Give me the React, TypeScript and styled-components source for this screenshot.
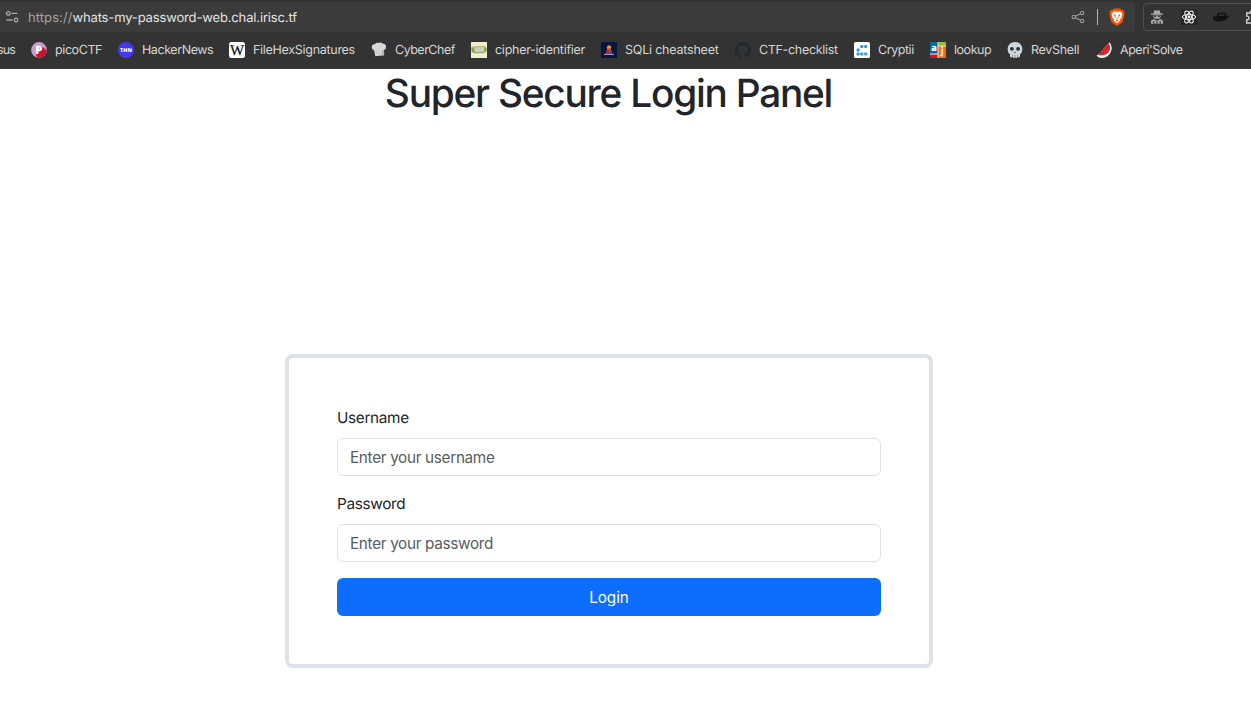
import React from "react";
import styled, { createGlobalStyle } from "styled-components";

const GlobalStyle = createGlobalStyle`
  * { box-sizing: border-box; }
  body {
    margin: 0;
    background: #fff;
    color: #212529;
    font-family: Inter, "Liberation Sans", sans-serif;
    overflow: hidden;
    text-rendering: geometricPrecision;
  }
`;

const Page = styled.div`
  width: 100%;
  height: 704px;
  overflow: hidden;
`;

const Chrome = styled.header`
  height: 69px;
  background: #333333;
  border-bottom: 1px solid #3a3a3a;
  overflow: hidden;
`;

const Toolbar = styled.div`
  display: flex;
  height: 32px;
  padding-top: 2px;
`;

const AddressBar = styled.div`
  display: flex;
  align-items: center;
  flex: none;
  width: 1135px;
  height: 30px;
  padding: 0 10px 0 4px;
  background: #3b3b3b;
  border-radius: 0 4px 4px 0;
`;

const Url = styled.div`
  flex: 1;
  margin-left: 8px;
  padding-top: 2px;
  font-size: 13px;
  line-height: 20px;
  letter-spacing: -0.15px;
  white-space: pre;
  color: #e3e3e3;
`;

const Scheme = styled.span`
  color: #a3a3a3;
  letter-spacing: 0.08px;
`;

const Divider = styled.div`
  width: 1px;
  height: 16px;
  margin: 0 11px;
  background: #b4b4b4;
`;

const Extensions = styled.div`
  display: flex;
  align-items: center;
  flex: none;
  gap: 16px;
  width: 140px;
  height: 28px;
  margin: 1px 0 0 8px;
  padding-left: 5px;
  border: 1px solid #4e4e4e;
  border-radius: 4px;
`;

const Bookmarks = styled.nav`
  display: flex;
  align-items: center;
  gap: 16px;
  height: 36px;
`;

const Bookmark = styled.div`
  display: flex;
  align-items: center;
  flex: none;
  gap: 8px;
`;

const Label = styled.span<{ $width: number; $tracking: number }>`
  width: ${(p) => p.$width}px;
  padding-top: 2px;
  font-size: 12.5px;
  line-height: 18px;
  letter-spacing: ${(p) => p.$tracking}px;
  white-space: nowrap;
  color: #d6d6d6;
`;

const ClippedLabel = styled(Label)`
  display: flex;
  justify-content: flex-end;
`;

const Icon = styled.svg`
  display: block;
  flex: none;
  width: 16px;
  height: 16px;
`;

const Main = styled.main`
  display: flex;
  flex-direction: column;
  align-items: center;
  width: 1218px;
`;

const Title = styled.h1`
  margin: 0 0 236px;
  padding: 1px 1px 0 0;
  font-size: 38.8px;
  font-weight: 500;
  line-height: 48px;
  letter-spacing: -1.24px;
  white-space: nowrap;
`;

const Card = styled.form`
  display: flex;
  flex-direction: column;
  gap: 16px;
  width: 648px;
  padding: 48px;
  border: 4px solid #dee2e6;
  border-radius: 8px;
`;

const Field = styled.label`
  display: flex;
  flex-direction: column;
  gap: 8px;
  font-size: 15.3px;
  line-height: 24px;
  letter-spacing: -0.32px;
`;

const Input = styled.input`
  height: 38px;
  padding: 0 12px;
  border: 1px solid #dee2e6;
  border-radius: 6px;
  background: #fff;
  font: inherit;
  letter-spacing: inherit;
  &::placeholder {
    color: #595c5f;
    opacity: 1;
  }
`;

const LoginButton = styled.button`
  height: 38px;
  padding: 1px 0 0;
  border: 0;
  border-radius: 6px;
  background: #0d6efd;
  color: #fff;
  font: 400 15.3px/24px Inter, "Liberation Sans", sans-serif;
  letter-spacing: -0.05px;
`;

const SettingsIcon = () => (
  <Icon viewBox="0 0 16 16" fill="none" stroke="#a8a8a8" strokeWidth="1.3" strokeLinecap="round">
    <circle cx="4.300" cy="4.4" r="1.8" />
    <path d="M8 4.4H12.800" />
    <circle cx="12.100" cy="11" r="1.8" />
    <path d="M3 11H8.100" />
  </Icon>
);

const ShareIcon = () => (
  <Icon viewBox="0 0 16 16" fill="none" stroke="#9c9c9c" strokeWidth="1.1">
    <circle cx="3.8" cy="8" r="1.7" />
    <circle cx="12.1" cy="4" r="1.7" />
    <circle cx="12.1" cy="12" r="1.7" />
    <path d="M5.4 7.3 10.5 4.8M5.4 8.7l5.1 2.5" />
  </Icon>
);

const BraveShield = styled(Icon)`
  width: 16px;
  height: 18px;
`;

const BraveIcon = () => (
  <BraveShield viewBox="0 0 16 18">
    <path fill="#ff5100" d="M5 .4h6l1.3 1.5 1.5-.1L15.600 4l-.5 1.5.4 1.3-1.8 6.700q-.3 1-1.100 1.600L8 18l-4.600-2.900q-.8-.6-1.100-1.600L.5 6.800.9 5.500.4 4l1.800-2.200 1.500.1z" />
    <path fill="#fff" d="m4.800 3.300 1.700.5h3l1.700-.5 2.300 2.800-.7 1.600.2 1.300-2 2.400.2 1.400L8 15.200l-3.200-2.400.2-1.400L3 9l.2-1.300-.7-1.600z" />
    <path fill="#ff5100" d="m4.500 6.400 2.300.4-.4 1.400.5 1.900 1.100.6 1.100-.6.500-1.900-.4-1.400 2.300-.4-1.300 2.100-.2.900L8 11.600 6 9.400l-.2-.9zM6.500 12.400 8 11.700l1.500.7L8 13.600z" />
    <path fill="#fff" d="M7.300 5h1.400v4.800L8 10.200l-.7-.4z" />
  </BraveShield>
);

const SpyIcon = () => (
  <Icon viewBox="0 0 16 16" fill="#aaaaaa">
    <path d="M5.300 1.300 7 1.600h2l1.700-.3.800 3.200H14v1.300H2V4.500h2.500z" />
    <path d="M4.300 6.400h7.400v1.500L10 9.800H6L4.300 7.900z" />
    <path d="M2 14.800v-3.100L4.800 9.900 8 11.600l3.200-1.700 2.800 1.800v3.100z" />
    <path fill="#333" d="M5 6.800h2v1.200H5.300zM9 6.800h2l-.3 1.200H9zM7.500 10.700h1v4.200h-1zM4.300 12h1v3h-1zM10.700 12h1v3h-1z" />
  </Icon>
);

const ReactIcon = () => (
  <Icon viewBox="0 0 16 16">
    <path fill="#272727" d="M0 0h16v16H0z" />
    <g fill="none" stroke="#fff" strokeWidth="1">
      <ellipse cx="8" cy="8" rx="6.700" ry="2.600" />
      <ellipse cx="8" cy="8" rx="6.700" ry="2.600" transform="rotate(60 8 8)" />
      <ellipse cx="8" cy="8" rx="6.700" ry="2.600" transform="rotate(120 8 8)" />
    </g>
    <circle cx="8" cy="8" r="1.400" fill="#fff" />
  </Icon>
);

const HatIcon = () => (
  <Icon viewBox="0 0 16 16">
    <path fill="#0c0c0c" d="M3.500 7.500 4.300 4.600Q5 3.500 8 3.700q4-.7 5 .2l.2 3.600 2.300-.7q.8.500-.5 2-2.500 2.800-7 3.500-5 .6-7.400-1.600Q-.5 8.700.6 7.600q1.300-.6 2.900-.1z" />
    <path fill="#292929" d="M1.500 8.300 3.400 8l.1 1.800q4.500 1.500 9.500-.7l.2-1.500 1.500-.3q-2 3.200-7 3.700-4.500.2-6.200-2.700zM5.500 4.800l6.300-.3-.1 2.200-6.500.8z" />
  </Icon>
);

const PuzzleIcon = () => (
  <Icon viewBox="0 0 16 16" fill="none" stroke="#cfcfcf" strokeWidth="1.400">
    <path d="M1.700 4h3.600V3.500a1.700 1.700 0 0 1 3.400 0V4H13v4h.7a1.500 1.500 0 0 1 0 3H13v3H1.700v-3.300h.5a1.800 1.800 0 0 0 0-3.600h-.5z" />
  </Icon>
);

const IconText = styled.text<{ $serif?: boolean }>`
  font-family: ${(p) => (p.$serif ? '"Liberation Serif", serif' : '"Open Sans", sans-serif')};
  font-weight: ${(p) => (p.$serif ? 400 : 800)};
  text-anchor: middle;
`;

const PicoIcon = () => (
  <Icon viewBox="0 0 16 16">
    <circle cx="8" cy="8" r="7.900" fill="#c99bcd" />
    <path fill="#c4122f" d="M10.800 4.200 15.800 8.500A7.900 7.900 0 0 1 6 15.600L4.800 12.300z" />
    <IconText x="7.800" y="12.200" fontSize="11.500" fill="#fff">P</IconText>
  </Icon>
);

const HackerIcon = () => (
  <Icon viewBox="0 0 16 16">
    <circle cx="8" cy="8" r="8" fill="#4338f0" />
    <IconText x="8" y="9.900" fontSize="5.400" fill="#fff">THN</IconText>
  </Icon>
);

const WikiIcon = () => (
  <Icon viewBox="0 0 16 16">
    <rect width="16" height="16" rx="2.500" fill="#fff" />
    <IconText $serif x="8" y="13" fontSize="15" fill="#111" stroke="#111" strokeWidth=".25">W</IconText>
  </Icon>
);

const ChefIcon = () => (
  <Icon viewBox="0 0 16 16">
    <path fill="#d7d7d7" d="M3.200 8.500Q.4 7.500.8 4.600 1.200 2 4 2 5.500.2 7.800 1q2-1.400 3.600.4 3.200-.2 3.600 2.500.4 3-2 4.300l.1 5-8.800 1z" />
    <path fill="#b2b2b2" d="M10.800 8.500 13 7.900l.1 5.400-2.300.5z" />
    <path fill="none" stroke="#c4c4c4" strokeWidth=".7" d="M5.500 8v5M8 8v5" />
  </Icon>
);

const CipherIcon = () => (
  <Icon viewBox="0 0 16 16">
    <path fill="#f5edd2" d="M0 0h16v16H0z" />
    <path fill="#a6b36e" d="M.5 5.300 3 4.300l10.500-.2L15.500 6v3.300l-2.300 1.900-9.500.4L.7 9.500z" />
    <path fill="#d5d9c3" d="m3.500 5.500 9.500-.6v4.500l-9 .4z" />
    <path fill="#8d9954" d="M.5 5.500 3 6.800v4.400L.7 9.500zM13.400 5l2 1.300v2.800l-2 1.500z" />
    <path stroke="#b6bda5" strokeWidth=".6" d="M5 6v3M7 6v3M9 5.800v3M11 5.800v3" />
  </Icon>
);

const SqlIcon = () => (
  <Icon viewBox="0 0 16 16">
    <path fill="#08163b" d="M0 0h16v16H0z" />
    <path fill="#e99b27" d="M6.800 3.500h2.600l.9 2-1.200 2H6.500l-.8-1.800z" />
    <path fill="#d8382e" d="m6.400 6.600 3.500-.1 1.400 5H4.800z" />
    <path fill="#263d91" d="M6.500 9h1.200v3H6.300zM9 9h1v3H9z" />
    <path fill="#d8d8df" d="M3 11.900h10v.8H3z" />
    <path fill="#9d3843" d="M4.600 11h6.700v.6H4.600z" />
  </Icon>
);

const GithubIcon = () => (
  <Icon viewBox="0 0 16 16">
    <path fill="#24292f" fillRule="evenodd" d="M8 0a8 8 0 0 0-2.530 15.590c.4.070.55-.17.55-.38v-1.490c-2.010.37-2.530-.49-2.690-.94-.09-.23-.48-.94-.82-1.130-.28-.15-.68-.52-.01-.53.63-.01 1.080.58 1.230.82.72 1.210 1.870.87 2.330.66.070-.52.28-.87.510-1.070-1.780-.2-3.640-.89-3.640-3.950 0-.87.310-1.590.82-2.150-.08-.2-.36-1.020.08-2.120 0 0 .67-.21 2.200.82a7.400 7.400 0 0 1 4 0c1.530-1.040 2.200-.82 2.200-.82.44 1.100.16 1.920.08 2.120.51.56.82 1.270.82 2.150 0 3.070-1.870 3.750-3.650 3.950.29.25.54.73.54 1.480v2.200c0 .21.15.46.55.38A8 8 0 0 0 8 0z" />
  </Icon>
);

const CryptiiIcon = () => (
  <Icon viewBox="0 0 16 16">
    <rect width="16" height="16" rx="1.500" fill="#fff" />
    <g fill="#1d9bf6">
      <rect x="6.300" y="3" width="3" height="3" rx=".8" />
      <rect x="10.200" y="3" width="3" height="3" rx=".8" />
      <rect x="2.600" y="6.600" width="3" height="3" rx=".8" />
      <rect x="2.600" y="10.400" width="3" height="3" rx=".8" />
      <rect x="6.300" y="10.400" width="3" height="3" rx=".8" />
      <rect x="10.200" y="10.400" width="3" height="3" rx=".8" />
    </g>
  </Icon>
);

const LookupIcon = () => (
  <Icon viewBox="0 0 16 16">
    <path fill="#eee7dc" d="M0 0h16v16H0z" />
    <path fill="#08679e" d="M0 0h7.500v11.500H0z" />
    <path fill="#c9182b" d="M0 12.500h7.500V16H0z" />
    <path fill="#9abd2c" d="M8.500 0H16v3.500H8.500z" />
    <path fill="#f26a12" d="M8.500 4.500H16V16H8.500z" />
    <IconText x="3.900" y="9" fontSize="9.500" fill="#fff">a</IconText>
    <IconText x="12" y="12.300" fontSize="10" fill="#ffe5c9">j</IconText>
  </Icon>
);

const SkullIcon = () => (
  <Icon viewBox="0 0 16 16">
    <path fill="#ccd6dd" d="M8 0c4.400 0 7.300 2.900 7.300 7 0 2.600-.6 4.600-2.300 5.200v1.900q0 1.300-1.200 1.300-.9 0-1.200-.6-.4 1.200-1.400 1.200-.8 0-1.200-.8-.4.800-1.200.8-1 0-1.400-1.200-.3.600-1.200.6Q3 15.400 3 14.100v-1.900C1.300 11.600.7 9.600.7 7 .7 2.900 3.600 0 8 0z" />
    <circle cx="4.900" cy="6.800" r="1.900" fill="#292f33" />
    <circle cx="11.100" cy="6.800" r="1.900" fill="#292f33" />
    <path fill="#4b555b" d="m8 9.500 1.100 1.500H6.900zM5.200 12.900h.5v1.800h-.5zM7.750 12.900h.5v2h-.5zM10.300 12.900h.5v1.800h-.5z" />
  </Icon>
);

const MelonIcon = () => (
  <Icon viewBox="0 0 16 16">
    <path fill="#f1f1ed" d="M13.500.2Q17 4.500 15 9.400 12.500 15.800 6 16 2.500 16.200.4 13.600L2 12.800z" />
    <path fill="#dc2931" d="M12.300.8Q15.200 5 13.400 9 10.500 14.200 2 13.100z" />
    <path fill="#56252b" d="m11.400 4 .8.300-.5 1zm-2 3 .9.200-.6.900zm2.400.5.8.2-.6.900zM7 9.800l.9.200-.6.900zm2.800.4.800.2-.6.900zm-4.500 1.500.8.200-.6.600z" />
    <path fill="#222" d="M2 5h1v1H2zm4-1h1v1H6zM3 8h1v1H3zm3-1h1v1H6zM1 10h1v1H1zm3 0h1v1H4z" />
  </Icon>
);

const bookmarks = [
  { name: "picoCTF", width: 47, tracking: -0.4, icon: <PicoIcon /> },
  { name: "HackerNews", width: 71, tracking: -0.43, icon: <HackerIcon /> },
  { name: "FileHexSignatures", width: 102, tracking: -0.29, icon: <WikiIcon /> },
  { name: "CyberChef", width: 60, tracking: -0.5, icon: <ChefIcon /> },
  { name: "cipher-identifier", width: 90, tracking: -0.27, icon: <CipherIcon /> },
  { name: "SQLi cheatsheet", width: 94, tracking: -0.21, icon: <SqlIcon /> },
  { name: "CTF-checklist", width: 79, tracking: -0.32, icon: <GithubIcon /> },
  { name: "Cryptii", width: 36, tracking: -0.45, icon: <CryptiiIcon /> },
  { name: "lookup", width: 37, tracking: -0.45, icon: <LookupIcon /> },
  { name: "RevShell", width: 49, tracking: -0.3, icon: <SkullIcon /> },
  { name: "Aperi'Solve", width: 63, tracking: -0.48, icon: <MelonIcon /> },
];

export default function App() {
  return (
    <Page>
      <GlobalStyle />
      <Chrome>
        <Toolbar>
          <AddressBar>
            <SettingsIcon />
            <Url><Scheme>https://</Scheme>whats-my-password-web.chal.irisc.tf</Url>
            <ShareIcon />
            <Divider />
            <BraveIcon />
          </AddressBar>
          <Extensions>
            <SpyIcon />
            <ReactIcon />
            <HatIcon />
            <PuzzleIcon />
          </Extensions>
        </Toolbar>
        <Bookmarks>
          <ClippedLabel $width={15} $tracking={-0.9}>sus</ClippedLabel>
          {bookmarks.map((b) => (
            <Bookmark key={b.name}>
              {b.icon}
              <Label $width={b.width} $tracking={b.tracking}>{b.name}</Label>
            </Bookmark>
          ))}
        </Bookmarks>
      </Chrome>
      <Main>
        <Title>Super Secure Login Panel</Title>
        <Card onSubmit={(e) => e.preventDefault()}>
          <Field>
            Username
            <Input type="text" placeholder="Enter your username" />
          </Field>
          <Field>
            Password
            <Input type="password" placeholder="Enter your password" />
          </Field>
          <LoginButton type="submit">Login</LoginButton>
        </Card>
      </Main>
    </Page>
  );
}
